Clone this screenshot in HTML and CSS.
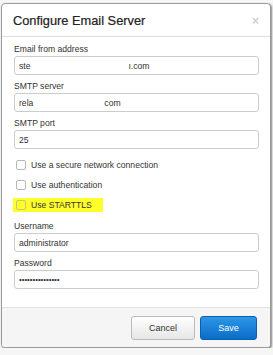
FILE: index.html
```html
<!DOCTYPE html>
<html lang="en">
<head>
  <meta charset="UTF-8">
  <title>Configure Email Server</title>
  <link rel="stylesheet" href="styles.css">
</head>
<body>

<div class="modal">
  <div class="modal-header">
    <h3 class="modal-title">Configure Email Server</h3>
    <span class="close">&times;</span>
  </div>

  <div class="modal-body">
    <label class="field-label">Email from address</label>
    <div class="input"><span>ste</span><span class="hidden-part"></span><span>ı.com</span></div>

    <label class="field-label">SMTP server</label>
    <div class="input"><span>rela</span><span class="hidden-part short"></span><span>com</span></div>

    <label class="field-label">SMTP port</label>
    <div class="input">25</div>

    <div class="checks">
      <label class="check"><span class="box"></span>Use a secure network connection</label>
      <label class="check"><span class="box"></span>Use authentication</label>
      <label class="check marked"><span class="box"></span>Use STARTTLS</label>
    </div>

    <label class="field-label">Username</label>
    <div class="input">administrator</div>

    <label class="field-label">Password</label>
    <div class="input dots">•••••••••••••••</div>
  </div>

  <div class="modal-footer">
    <button class="btn">Cancel</button>
    <button class="btn btn-primary">Save</button>
  </div>
</div>

</body>
</html>
```

FILE: styles.css
```css
body {
  font-family: "Liberation Sans", Arial, sans-serif;
  background: #f6f6f6;
  margin: 0;
  padding: 3px 0 0 1px;
  color: #333;
}

.modal {
  width: 268px;
  height: 343px;
  background-color: #fff;
  border: 1px solid #9a9a9a;
  border-radius: 4px;
  box-shadow: 1px 1px 2px rgba(0, 0, 0, 0.45);
  display: flex;
  flex-direction: column;
  overflow: hidden;
}

.modal-header {
  height: 32px;
  border-bottom: 1px solid #ddd;
  display: flex;
  align-items: center;
  justify-content: space-between;
  padding: 0 11px 0 11px;
}

.modal-title {
  margin: 0;
  font-size: 12.8px;
  font-weight: normal;
  color: #222;
  -webkit-text-stroke: 0.2px #222;
}

.close {
  color: #d0d0d0;
  font-size: 12px;
  font-weight: bold;
  margin-top: 2px;
}

.modal-body {
  flex: 1;
  padding: 6px 11px 0 12px;
  font-size: 8.6px;
}

.field-label {
  display: block;
  line-height: 12px;
  margin-bottom: 1px;
}

.input {
  height: 17px;
  border: 1px solid #ccc;
  border-radius: 3px;
  padding: 0 4px;
  margin-bottom: 5px;
  display: flex;
  align-items: center;
  color: #333;
  white-space: nowrap;
}

.hidden-part {
  width: 98px;
}

.hidden-part.short {
  width: 71px;
}

.dots {
  font-size: 8px;
  letter-spacing: -0.1px;
  color: #334;
}

.checks {
  padding: 4px 0 2px 0;
}

.check {
  display: flex;
  align-items: center;
  height: 14px;
  margin-bottom: 6px;
  padding-left: 2px;
}

.check .box {
  width: 8px;
  height: 8px;
  border: 1px solid #b8b8b8;
  border-radius: 2px;
  margin-right: 5px;
  background: #fff;
}

.check.marked {
  width: 87px;
  background: #ffff2a;
  margin-left: -1px;
  padding-left: 3px;
}

.check.marked .box {
  background: transparent;
  border-color: #c8c87a;
}

.modal-footer {
  height: 39px;
  background: #f5f5f5;
  border-top: 1px solid #e3e3e3;
  display: flex;
  justify-content: flex-end;
  align-items: center;
  gap: 5px;
  padding: 0 13px 0 0;
}

.btn {
  height: 24px;
  width: 64px;
  font-family: "Liberation Sans", Arial, sans-serif;
  font-size: 9px;
  color: #333;
  border: 1px solid #bbb;
  border-radius: 3px;
  background: linear-gradient(#fff, #e6e6e6);
  cursor: pointer;
}

.btn-primary {
  width: 57px;
  color: #fff;
  border-color: #0a5fae;
  background: linear-gradient(#2d97e8, #0a6cc8);
}
```
